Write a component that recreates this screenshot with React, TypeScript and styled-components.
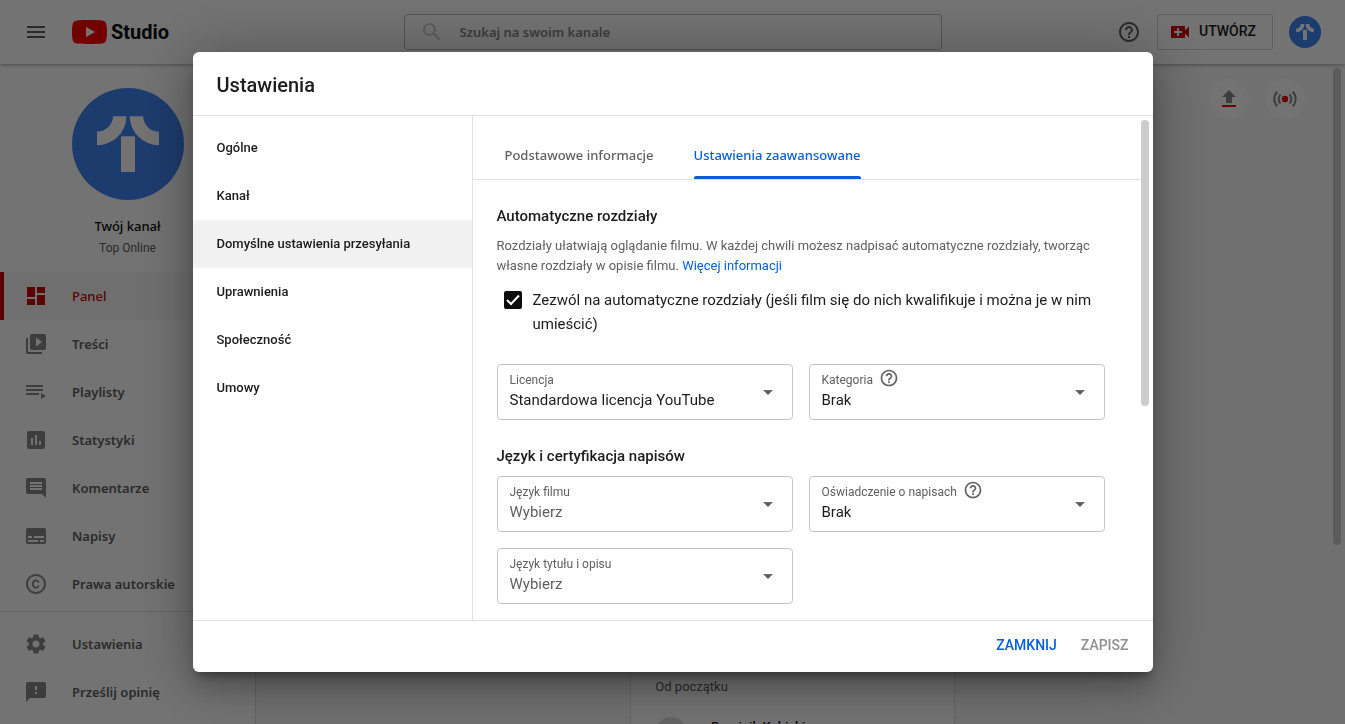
import React, { useId, useState } from "react";
import styled, { createGlobalStyle, css } from "styled-components";
import {
  MdArrowDropDown,
  MdComment,
  MdCopyright,
  MdDashboard,
  MdFeedback,
  MdHelpOutline,
  MdInsertChart,
  MdMenu,
  MdSearch,
  MdSettings,
  MdVideoCall,
  MdVideoLibrary,
} from "react-icons/md";

const roboto = `Roboto, "Liberation Sans", sans-serif`;
const noto = `"Noto Sans", "Open Sans", sans-serif`;

const GlobalStyle = createGlobalStyle`
  *, *::before, *::after { box-sizing: border-box; }
  body { margin: 0; background: #fff; font-family: ${roboto}; color: #1c1c1c; overflow: hidden; }
  button, input, select { font: inherit; color: inherit; }
  button { border: 0; background: none; padding: 0; cursor: pointer; }
  a { text-decoration: none; color: inherit; }
  h1, h2, p, ul { margin: 0; padding: 0; }
  ul { list-style: none; }
`;

/* ---------- page behind the dialog ---------- */

const Page = styled.div`
  height: 100vh;
  display: flex;
  flex-direction: column;
  overflow: hidden;
`;

const Header = styled.header`
  flex: none;
  height: 64px;
  display: grid;
  grid-template-columns: 1fr minmax(200px, 40vw) 1fr;
  align-items: center;
  padding: 0 24px;
  background: #fff;
  box-shadow: 0 1px 4px rgba(0, 0, 0, 0.35);
  z-index: 1;
`;

const HeaderStart = styled.div`
  display: flex;
  align-items: center;
  gap: 24px;
`;

const HeaderEnd = styled.div`
  display: flex;
  align-items: center;
  justify-content: flex-end;
  gap: 16px;
`;

const IconButton = styled.button`
  display: flex;
  color: #606060;
`;

const Logo = styled.a`
  display: flex;
  align-items: center;
  gap: 4px;
`;

const Wordmark = styled.span`
  font: 700 20px/32px ${roboto};
  color: #0d0d0d;
`;

const Search = styled.label`
  display: flex;
  align-items: center;
  height: 36px;
  padding-left: 15px;
  gap: 16px;
  border: 1px solid #bbb;
  border-radius: 3px;
  color: #ccc;
`;

const SearchInput = styled.input`
  flex: 1;
  padding: 0;
  border: 0;
  outline: 0;
  background: none;
  font: 600 13px/20px ${noto};
  &::placeholder { color: #888; opacity: 1; }
`;

const CreateButton = styled.button`
  display: flex;
  align-items: center;
  gap: 7px;
  height: 36px;
  padding: 0 16px 2px 10px;
  border: 1px solid #d5d5d5;
  border-radius: 2px;
  font: 500 14px/20px ${roboto};
  color: #1c1c1c;
  svg { margin-top: 2px; color: #c00; }
`;

const Columns = styled.div`
  flex: 1;
  min-height: 0;
  display: flex;
`;

const Sidebar = styled.nav`
  flex: none;
  width: 256px;
  border-right: 1px solid #e0e0e0;
  background: #fff;
`;

const Channel = styled.div`
  display: flex;
  flex-direction: column;
  align-items: center;
  height: 208px;
  padding-top: 24px;
`;

const ChannelTitle = styled.span`
  margin-top: 16px;
  font: 500 13px/20px ${noto};
  color: #0d0d0d;
`;

const ChannelName = styled.span`
  font: 400 12px/24px ${roboto};
  color: #606060;
`;

const NavLink = styled.a<{ $active?: boolean }>`
  display: flex;
  align-items: center;
  gap: 24px;
  height: 48px;
  padding-left: 20px;
  border-left: 4px solid transparent;
  font: 600 13px/20px ${noto};
  color: #606060;
  svg { color: #888; }
  ${(p) =>
    p.$active &&
    css`
      border-left-color: #c00;
      background: #f7f7f7;
      color: #c00;
      font-weight: 500;
      svg { color: #c00; }
    `}
`;

const NavFooter = styled.ul`
  margin-top: 3px;
  padding-top: 8px;
  border-top: 1px solid #ddd;
`;

const Main = styled.main`
  flex: 1;
  display: flex;
  background: #f9f9f9;
`;

const Dashboard = styled.div`
  flex: 1;
  padding: 15px 28px 0 24px;
`;

const QuickActions = styled.div`
  display: flex;
  justify-content: flex-end;
  gap: 16px;
`;

const RoundButton = styled.button`
  display: grid;
  place-items: center;
  width: 40px;
  height: 40px;
  border-radius: 50%;
  background: #fff;
`;

const Cards = styled.div`
  display: grid;
  grid-template-columns: repeat(3, 1fr);
  gap: 26px;
  margin-top: 32px;
`;

const Card = styled.section`
  grid-column: 2;
  min-height: 640px;
  padding: 501px 24px 24px;
  border: 1px solid #e0e0e0;
  background: #fff;
  p { padding: 24px 0 20px; font-size: 13px; line-height: 20px; color: #606060; }
`;

const Subscriber = styled.div`
  display: flex;
  gap: 24px;
  font: 500 13px/20px ${roboto};
  &::before {
    content: "";
    width: 32px;
    height: 32px;
    border-radius: 50%;
    background: #ddd;
  }
`;

const PageScroll = styled.div`
  flex: none;
  width: 12px;
  padding-top: 4px;
  &::before {
    content: "";
    display: block;
    width: 8px;
    height: 477px;
    border-radius: 4px;
    background: #ccc;
  }
`;

/* ---------- dialog ---------- */

const Scrim = styled.div`
  position: fixed;
  inset: 0;
  z-index: 10;
  display: grid;
  place-items: center;
  background: rgba(0, 0, 0, 0.55);
`;

const Dialog = styled.div`
  display: flex;
  flex-direction: column;
  width: min(960px, 94vw);
  height: min(620px, 94vh);
  overflow: hidden;
  border-radius: 6px;
  background: #fff;
  box-shadow: 0 16px 24px 2px rgba(0, 0, 0, 0.14), 0 6px 60px 5px rgba(0, 0, 0, 0.3),
    0 8px 10px -5px rgba(0, 0, 0, 0.4);
`;

const DialogTitle = styled.h1`
  flex: none;
  height: 64px;
  padding: 17px 24px 0;
  border-bottom: 1px solid #e3e3e3;
  font: 500 20px/32px ${roboto};
`;

const DialogBody = styled.div`
  flex: 1;
  min-height: 0;
  display: flex;
`;

const Menu = styled.ul`
  flex: none;
  width: 280px;
  padding-top: 8px;
  border-right: 1px solid #e3e3e3;
`;

const MenuButton = styled.button<{ $active?: boolean }>`
  display: block;
  width: 100%;
  height: 48px;
  padding: 0 24px;
  text-align: left;
  font: 500 13px/24px ${roboto};
  background: ${(p) => (p.$active ? "#f1f1f1" : "transparent")};
`;

const Panel = styled.div`
  flex: 1;
  min-width: 0;
  overflow: hidden;
`;

const Tabs = styled.div`
  display: flex;
  gap: 40px;
  height: 64px;
  padding: 16px 32px 0;
  border-bottom: 1px solid #e3e3e3;
`;

const Tab = styled.button<{ $active?: boolean }>`
  padding-top: 13px;
  font: 500 13px/20px ${noto};
  color: ${(p) => (p.$active ? "#065fd4" : "#606060")};
  &::after {
    content: "";
    display: block;
    height: 3px;
    margin-top: 11px;
    border-radius: 2px 2px 0 0;
    background: ${(p) => (p.$active ? "#065fd4" : "transparent")};
  }
`;

const Form = styled.form`
  padding: 24px 36px 0 24px;
`;

const Heading = styled.h2`
  font: 500 15px/24px ${roboto};
`;

const Hint = styled.p`
  margin-top: 8px;
  font: 400 13px/20px ${roboto};
  color: #606060;
  a { color: #065fd4; }
`;

const CheckRow = styled.label`
  display: flex;
  align-items: flex-start;
  gap: 11px;
  margin: 12px 0 28px;
  padding-left: 7px;
  font: 400 15px/24px ${roboto};
`;

const CheckMark = styled.span`
  flex: none;
  display: grid;
  margin-top: 3px;
  > * { grid-area: 1 / 1; }
  svg { pointer-events: none; }
`;

const CheckInput = styled.input`
  appearance: none;
  width: 18px;
  height: 18px;
  margin: 0;
  border: 2px solid #0d0d0d;
  border-radius: 2px;
  &:checked { background: #0d0d0d; }
  &:not(:checked) + svg { visibility: hidden; }
`;

const Fields = styled.div`
  display: grid;
  grid-template-columns: 1fr 1fr;
  gap: 16px;
  & + h2 { margin-top: 24px; }
  h2 + & { margin-top: 8px; }
`;

const FieldBox = styled.div`
  display: grid;
  grid-template-columns: 1fr 24px;
  grid-template-rows: 16px 24px;
  align-items: center;
  height: 56px;
  padding: 7px 12px;
  border: 1px solid #c6c6c6;
  border-radius: 4px;
  > svg { grid-area: 1 / 2 / 3 / 3; color: #606060; pointer-events: none; }
`;

const FieldLabel = styled.div`
  display: flex;
  align-items: center;
  gap: 6px;
  height: 16px;
  font: 400 12px/16px ${roboto};
  color: #606060;
  svg { margin-top: -4px; }
`;

const Select = styled.select<{ $empty?: boolean }>`
  appearance: none;
  grid-area: 2 / 1;
  width: 100%;
  padding: 0;
  border: 0;
  outline: 0;
  background: none;
  font: 400 15px/24px ${roboto};
  color: ${(p) => (p.$empty ? "#606060" : "#1c1c1c")};
`;

const ScrollTrack = styled.div`
  flex: none;
  width: 12px;
  padding-top: 4px;
  &::before {
    content: "";
    display: block;
    width: 8px;
    height: 286px;
    border-radius: 4px;
    background: #ccc;
  }
`;

const DialogFooter = styled.footer`
  flex: none;
  display: flex;
  align-items: center;
  justify-content: flex-end;
  gap: 24px;
  height: 52px;
  padding: 0 24px 4px;
  border-top: 1px solid #e3e3e3;
`;

const ActionButton = styled.button`
  font: 500 14px/24px ${roboto};
  color: #065fd4;
  &:disabled { color: #909090; }
`;

/* ---------- drawings ---------- */

const Avatar = ({ size }: { size: number }) => (
  <svg width={size} height={size} viewBox="0 0 112 112" aria-hidden="true">
    <circle cx="56" cy="56" r="56" fill="#4285f4" />
    <g fill="#fff">
      <path d="M41 28.300H54.500A29.500 29.500 0 0 1 25 57.300V43.500A15.500 15.500 0 0 0 41 28.300z" />
      <path d="M71.200 28.300H57.700A29.500 29.500 0 0 0 87 57.300V43.500A15.500 15.500 0 0 1 71.200 28.300z" />
      <path d="M49 48.300h14V84H49z" />
    </g>
  </svg>
);

const YouTubeMark = () => (
  <svg width="35" height="24" viewBox="0 0 35 24" aria-hidden="true">
    <path
      d="M34.200 3.800A4.300 4.300 0 0 0 31.200.700C28.500 0 17.500 0 17.500 0S6.500 0 3.800.700A4.300 4.300 0 0 0 .800 3.800C0 6.500 0 12 0 12s0 5.500.800 8.200a4.300 4.300 0 0 0 3 3.100c2.700.700 13.700.700 13.700.700s11 0 13.700-.700a4.300 4.300 0 0 0 3-3.100C35 17.500 35 12 35 12s0-5.500-.800-8.200z"
      fill="#f00"
    />
    <path d="M14 17l9-5-9-5z" fill="#fff" />
  </svg>
);

const PlaylistIcon = () => (
  <svg width="24" height="24" viewBox="0 0 24 24" fill="currentColor" aria-hidden="true">
    <path d="M2 5h17v2H2zM2 9h17v2H2zM2 13h13v2H2zM17 13v6l5-3z" />
  </svg>
);

const SubtitlesIcon = () => (
  <svg width="24" height="24" viewBox="0 0 24 24" fill="currentColor" aria-hidden="true">
    <path
      fillRule="evenodd"
      d="M4 4h16a2 2 0 0 1 2 2v12a2 2 0 0 1-2 2H4a2 2 0 0 1-2-2V6a2 2 0 0 1 2-2zM4 12v2h4v-2zM10 12v2h10v-2zM4 16v2h10v-2zM16 16v2h4v-2z"
    />
  </svg>
);

const UploadIcon = () => (
  <svg width="24" height="24" viewBox="0 0 24 24" aria-hidden="true">
    <path d="M9 16h6v-6h4l-7-7-7 7h4z" fill="#888" />
    <path d="M5 18h14v2H5z" fill="#e00" />
  </svg>
);

const LiveIcon = () => (
  <svg width="24" height="24" viewBox="0 0 24 24" fill="none" stroke="#888" strokeWidth="2" aria-hidden="true">
    <circle cx="12" cy="12" r="3.200" fill="#e00" stroke="none" />
    <path d="M7.500 7.500a6.500 6.500 0 0 0 0 9M16.500 7.500a6.500 6.500 0 0 1 0 9M4.200 4.800a10.500 10.500 0 0 0 0 14.400M19.800 4.800a10.500 10.500 0 0 1 0 14.400" />
  </svg>
);

/* ---------- pieces ---------- */

type FieldProps = { label: string; options: string[]; help?: boolean; empty?: boolean };

const Field = ({ label, options, help, empty }: FieldProps) => {
  const id = useId();
  return (
    <FieldBox>
      <FieldLabel>
        <label htmlFor={id}>{label}</label>
        {help && <MdHelpOutline size={20} />}
      </FieldLabel>
      <Select id={id} $empty={empty}>
        {options.map((o) => (
          <option key={o}>{o}</option>
        ))}
      </Select>
      <MdArrowDropDown size={24} />
    </FieldBox>
  );
};

const navItems = [
  { label: "Panel", icon: <MdDashboard size={24} />, active: true },
  { label: "Treści", icon: <MdVideoLibrary size={24} /> },
  { label: "Playlisty", icon: <PlaylistIcon /> },
  { label: "Statystyki", icon: <MdInsertChart size={24} /> },
  { label: "Komentarze", icon: <MdComment size={24} /> },
  { label: "Napisy", icon: <SubtitlesIcon /> },
  { label: "Prawa autorskie", icon: <MdCopyright size={24} /> },
];

const navFooterItems = [
  { label: "Ustawienia", icon: <MdSettings size={24} /> },
  { label: "Prześlij opinię", icon: <MdFeedback size={24} /> },
];

const menuItems = ["Ogólne", "Kanał", "Domyślne ustawienia przesyłania", "Uprawnienia", "Społeczność", "Umowy"];

export default function App() {
  const [section, setSection] = useState(2);
  const [tab, setTab] = useState(1);

  return (
    <>
      <GlobalStyle />
      <Page>
        <Header>
          <HeaderStart>
            <IconButton aria-label="Menu">
              <MdMenu size={24} />
            </IconButton>
            <Logo href="#" aria-label="Studio">
              <YouTubeMark />
              <Wordmark>Studio</Wordmark>
            </Logo>
          </HeaderStart>
          <Search>
            <MdSearch size={24} />
            <SearchInput placeholder="Szukaj na swoim kanale" aria-label="Szukaj na swoim kanale" />
          </Search>
          <HeaderEnd>
            <IconButton aria-label="Pomoc">
              <MdHelpOutline size={24} />
            </IconButton>
            <CreateButton>
              <MdVideoCall size={24} />
              UTWÓRZ
            </CreateButton>
            <IconButton aria-label="Konto">
              <Avatar size={32} />
            </IconButton>
          </HeaderEnd>
        </Header>
        <Columns>
          <Sidebar>
            <Channel>
              <Avatar size={112} />
              <ChannelTitle>Twój kanał</ChannelTitle>
              <ChannelName>Top Online</ChannelName>
            </Channel>
            <ul>
              {navItems.map((n) => (
                <li key={n.label}>
                  <NavLink href="#" $active={n.active}>
                    {n.icon}
                    {n.label}
                  </NavLink>
                </li>
              ))}
            </ul>
            <NavFooter>
              {navFooterItems.map((n) => (
                <li key={n.label}>
                  <NavLink href="#">
                    {n.icon}
                    {n.label}
                  </NavLink>
                </li>
              ))}
            </NavFooter>
          </Sidebar>
          <Main>
            <Dashboard>
              <QuickActions>
                <RoundButton aria-label="Prześlij">
                  <UploadIcon />
                </RoundButton>
                <RoundButton aria-label="Transmisja">
                  <LiveIcon />
                </RoundButton>
              </QuickActions>
              <Cards>
                <Card>
                  <p>Od początku</p>
                  <Subscriber>Dominik Kubicki</Subscriber>
                </Card>
              </Cards>
            </Dashboard>
            <PageScroll />
          </Main>
        </Columns>
      </Page>

      <Scrim>
        <Dialog role="dialog" aria-modal="true" aria-labelledby="dialog-title">
          <DialogTitle id="dialog-title">Ustawienia</DialogTitle>
          <DialogBody>
            <Menu>
              {menuItems.map((m, i) => (
                <li key={m}>
                  <MenuButton $active={i === section} onClick={() => setSection(i)}>
                    {m}
                  </MenuButton>
                </li>
              ))}
            </Menu>
            <Panel>
              <Tabs role="tablist">
                {["Podstawowe informacje", "Ustawienia zaawansowane"].map((t, i) => (
                  <Tab key={t} role="tab" aria-selected={i === tab} $active={i === tab} onClick={() => setTab(i)}>
                    {t}
                  </Tab>
                ))}
              </Tabs>
              <Form>
                <Heading>Automatyczne rozdziały</Heading>
                <Hint>
                  Rozdziały ułatwiają oglądanie filmu. W każdej chwili możesz nadpisać automatyczne rozdziały, tworząc
                  własne rozdziały w opisie filmu. <a href="#">Więcej informacji</a>
                </Hint>
                <CheckRow>
                  <CheckMark>
                    <CheckInput type="checkbox" defaultChecked />
                    <svg width="18" height="18" viewBox="0 0 18 18" fill="none" stroke="#fff" strokeWidth="2" aria-hidden="true">
                      <path d="M3 9l4 4 8-8.500" />
                    </svg>
                  </CheckMark>
                  Zezwól na automatyczne rozdziały (jeśli film się do nich kwalifikuje i można je w nim umieścić)
                </CheckRow>
                <Fields>
                  <Field label="Licencja" options={["Standardowa licencja YouTube"]} />
                  <Field label="Kategoria" options={["Brak"]} help />
                </Fields>
                <Heading>Język i certyfikacja napisów</Heading>
                <Fields>
                  <Field label="Język filmu" options={["Wybierz"]} empty />
                  <Field label="Oświadczenie o napisach" options={["Brak"]} help />
                  <Field label="Język tytułu i opisu" options={["Wybierz"]} empty />
                </Fields>
              </Form>
            </Panel>
            <ScrollTrack />
          </DialogBody>
          <DialogFooter>
            <ActionButton>ZAMKNIJ</ActionButton>
            <ActionButton disabled>ZAPISZ</ActionButton>
          </DialogFooter>
        </Dialog>
      </Scrim>
    </>
  );
}
